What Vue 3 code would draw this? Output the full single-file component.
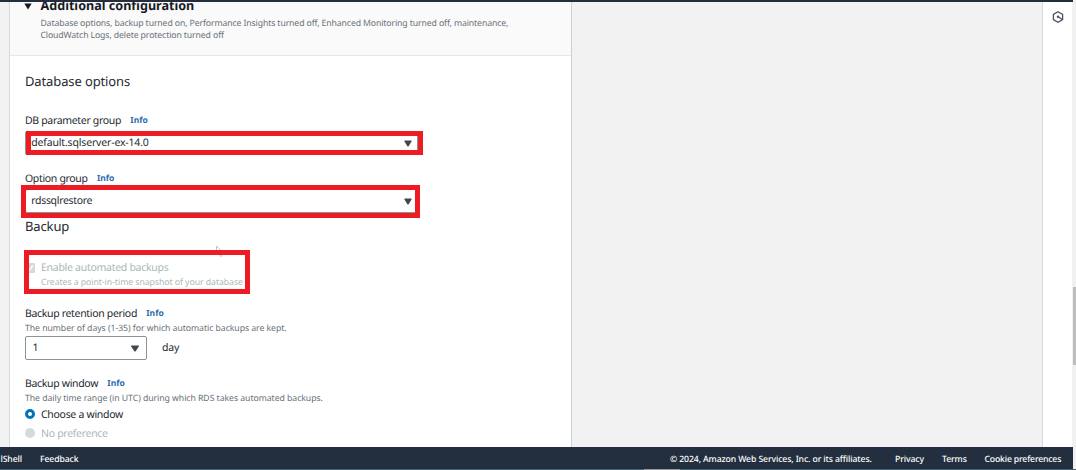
<script setup>
const groups = [
  { label: 'DB parameter group', value: 'default.sqlserver-ex-14.0', mark: 'mark-parameter' },
  { label: 'Option group', value: 'rdssqlrestore', mark: 'mark-option' },
]
</script>

<template>
  <div class="screen">
    <div class="topbar"></div>
    <div class="workspace">
      <main class="panel">
        <header class="panel-head">
          <svg class="disclosure" width="8" height="7" viewBox="0 0 8 7"><path d="M.3.500h7.400L4 6.500z" fill="#16191f" /></svg>
          <div>
            <h2><span>Additional configuration</span></h2>
            <p><span>Database options, backup turned on, Performance Insights turned off, Enhanced Monitoring turned off, maintenance,</span></p>
            <p><span>CloudWatch Logs, delete protection turned off</span></p>
          </div>
        </header>
        <section class="form">
          <h3 class="db-title"><span>Database options</span></h3>
          <div v-for="g in groups" :key="g.label" class="field">
            <div class="label"><span>{{ g.label }}</span><a>Info</a></div>
            <div class="select">
              <span>{{ g.value }}</span>
              <svg width="8" height="7" viewBox="0 0 8 7"><path d="M.5.500h7v1L4.500 6.500h-1L.5 1.500z" fill="#414750" /></svg>
              <i class="mark" :class="g.mark"></i>
            </div>
          </div>
          <h3 class="backup-title"><span>Backup</span></h3>
          <div class="backup-check">
            <svg class="check" width="10" height="10" viewBox="0 0 10 10"><rect width="10" height="10" rx="1" fill="#d5dbdb" /><path d="M2 5.500l2 2L8 2.500" fill="none" stroke="#fff" stroke-width="1.300" /></svg>
            <div>
              <div class="enable"><span>Enable automated backups</span></div>
              <div class="creates"><span>Creates a point-in-time snapshot of your database</span></div>
            </div>
            <svg class="cursor" width="9" height="13" viewBox="0 0 9 13"><path d="M1.500 1v8l2-1.500 2 4 1.500-.8-1.800-3.500h2.300z" fill="#fff" stroke="#aaa" stroke-width=".7" /></svg>
            <i class="mark mark-backup"></i>
          </div>
          <div class="label retention"><span>Backup retention period</span><a>Info</a></div>
          <div class="hint"><span>The number of days (1-35) for which automatic backups are kept.</span></div>
          <div class="days">
            <div class="select short">
              <span>1</span>
              <svg width="8" height="7" viewBox="0 0 8 7"><path d="M.2.500h7.600v1L4.500 6.500h-1L.2 1.500z" fill="#414750" /></svg>
            </div>
            <span class="unit">day</span>
          </div>
          <div class="label window"><span>Backup window</span><a>Info</a></div>
          <div class="hint"><span>The daily time range (in UTC) during which RDS takes automated backups.</span></div>
          <div class="radio chosen"><i></i><span>Choose a window</span></div>
          <div class="radio disabled"><i></i><span>No preference</span></div>
        </section>
      </main>
      <aside class="rail">
        <svg width="12" height="12" viewBox="0 0 12 12" fill="none" stroke="#4b5360" stroke-width="1.300"><path d="M6 .8l4.600 2.600v5.200L6 11.200 1.400 8.600V3.400z" /><circle cx="6" cy="5.800" r="1.200" fill="#4b5360" stroke="none" /><path d="M6 5.800l4 2.400" /></svg>
      </aside>
      <div class="scroll"><div class="thumb"></div></div>
    </div>
    <footer>
      <span class="shell">lShell</span><span class="feedback">Feedback</span>
      <span class="copyright">© 2024, Amazon Web Services, Inc. or its affiliates.</span>
      <span class="privacy">Privacy</span><span class="terms">Terms</span><span class="cookie">Cookie preferences</span>
    </footer>
    <div class="taskbar"><i></i></div>
  </div>
</template>

<style>
body { margin: 0; overflow: hidden; }
</style>

<style scoped>
* { box-sizing: border-box; }
.screen { width: 1076px; height: 470px; display: flex; flex-direction: column; overflow: hidden; background: #f2f2f2; font-family: "Noto Sans", sans-serif; color: #242a31; white-space: nowrap; text-rendering: geometricPrecision; }
.topbar { width: 1073px; height: 2px; flex: none; background: #232f3e; z-index: 1; }
.workspace { height: 445px; flex: none; display: flex; }
.panel { width: 563px; margin-left: 9px; border-left: 1px solid #d5dbdb; border-right: 1px solid #cbd2d2; background: #fff; }
.panel-head { height: 54px; background: #fafafa; border-bottom: 1px solid #e4e9e9; display: flex; overflow: hidden; padding-left: 14px; }
.disclosure { margin: 1px 8px 0 0; flex: none; }
h2, h3, p { margin: 0; font-weight: 400; }
h2 { font-size: 12.600px; font-weight: 700; line-height: 18px; height: 15px; margin: -5px 0 5px .5px; color: #16191f; }
p { font-size: 8.700px; letter-spacing: -.115px; line-height: 12px; color: #687078; }
.panel-head p { margin-left: .4px; }
.form { padding: 0 15px; height: 391px; display: flex; flex-direction: column; }
h3 { font-size: 13px; line-height: 18px; letter-spacing: -.12px; }
.db-title { margin-top: 16px; margin-bottom: 22px; }
.label { height: 16px; line-height: 18px; font-size: 10.500px; letter-spacing: -.33px; display: flex; }
.label a { margin-left: 9.300px; font-size: 8.500px; letter-spacing: 0; font-weight: 700; color: #2b6cb0; }
.field { height: 58px; }
.select { position: relative; width: 393px; height: 24px; margin-top: 3px; border: 1px solid #879596; border-radius: 2px; font-size: 10.500px; letter-spacing: -.17px; line-height: 21px; display: flex; justify-content: space-between; align-items: center; padding: 0 5.500px 0 5.300px; }
.field + .field .select { letter-spacing: -.33px; }
.mark { position: absolute; border: 5px solid #ed1c24; }
.mark-parameter { left: 0; top: -1px; width: 397px; height: 24px; }
.mark-option { left: -5px; top: -5px; width: 399px; height: 33px; }
.backup-title { margin-top: -11px; }
.backup-check { position: relative; height: 40px; margin-top: 23px; display: flex; padding-top: 1px; color: #aab7b8; }
.check { margin: 4px 6px 0 0; }
.enable { font-size: 10.500px; letter-spacing: -.28px; line-height: 18px; height: 16px; }
.creates { font-size: 8.700px; letter-spacing: -.05px; line-height: 14px; }
.mark-backup { left: -1px; top: -8px; width: 226px; height: 44px; }
.cursor { position: absolute; left: 190px; top: -13px; }
.retention { margin-top: 7px; }
.hint { font-size: 8.700px; letter-spacing: -.05px; line-height: 14px; color: #687078; height: 14px; }
.days { display: flex; align-items: center; }
.short { width: 122px; margin-top: 1px; padding: 0 7.500px 0 6.500px; line-height: 23px; }
.unit { margin-left: 15px; font-size: 10.500px; letter-spacing: -.2px; line-height: 16px; }
.window { margin-top: 15px; }
.radio { display: flex; align-items: center; height: 18px; line-height: 18px; font-size: 10.500px; letter-spacing: -.3px; margin-bottom: 1px; }
.radio span { padding-top: 1px; }
.radio i { width: 10px; height: 10px; border-radius: 50%; margin-right: 6px; background: #d5dbdb; }
.radio.chosen i { border: 3px solid #0073bb; background: #fff; }
.disabled { color: #aab7b8; }
.rail { width: 30px; margin-left: 470px; border-left: 1px solid #d5dbdb; background: #fff; padding: 9px 0 0 9px; }
.rail svg { display: block; }
.scroll { width: 4px; background: #f1f1f1; padding: 285px 0 0 1px; }
.thumb { height: 78px; background: #bdbdbd; }
footer { width: 1073px; height: 22px; flex: none; background: #232f3e; color: #fff; font-size: 8.700px; letter-spacing: -.12px; font-weight: 500; line-height: 24px; display: flex; overflow: hidden; }
.shell { width: 22px; display: flex; justify-content: flex-end; }
.feedback { margin-left: 18px; width: 630px; }
.copyright { width: 225px; }
.privacy { width: 47px; }
.terms { width: 42.500px; }
.cookie { letter-spacing: -.18px; }
.taskbar { height: 1px; background: #3e6477; padding-left: 644px; }
.taskbar i { display: block; width: 36px; height: 1px; background: #999; }
</style>
